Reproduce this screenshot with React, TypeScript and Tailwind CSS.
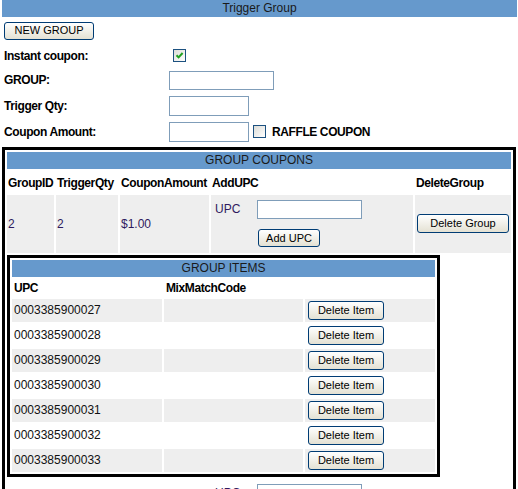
import React from 'react';

type Item = { upc: string; mixMatch: string };

const items: Item[] = [
  { upc: '0003385900027', mixMatch: '' },
  { upc: '0003385900028', mixMatch: '' },
  { upc: '0003385900029', mixMatch: '' },
  { upc: '0003385900030', mixMatch: '' },
  { upc: '0003385900031', mixMatch: '' },
  { upc: '0003385900032', mixMatch: '' },
  { upc: '0003385900033', mixMatch: '' },
];

const btn =
  'rounded-[3px] border border-[#003c74] bg-gradient-to-b from-white to-[#e4e1d3] text-[11px] leading-none text-black';

const CheckBox: React.FC<{ checked?: boolean }> = ({ checked }) => (
  <span className="flex h-[13px] w-[13px] items-center justify-center border border-[#1c5180] bg-gradient-to-br from-[#dcdcd7] to-white">
    {checked && (
      <svg width="9" height="9" viewBox="0 0 9 9">
        <path d="M1.5 4.2 L3.6 6.4 L7.6 2" stroke="#21a121" strokeWidth="2" fill="none" />
      </svg>
    )}
  </span>
);

const TextBox: React.FC<{ w: string; h?: string }> = ({ w, h = 'h-[20px]' }) => (
  <input type="text" className={`${w} ${h} border border-[#7f9db9] bg-white outline-none`} />
);

const UpcLine = () => (
  <div className="flex items-center">
    <span className="w-[42px]">UPC</span>
    <TextBox w="w-[105px]" h="h-[19px]" />
  </div>
);

export default function App() {
  return (
    <div className="h-[489px] w-[518px] overflow-hidden bg-white font-['Liberation_Sans',Arial,sans-serif] text-[12px] text-[#111]">
      {/* title bar */}
      <div className="ml-[2px] mr-[1px] h-[17px] bg-[#6699cc] text-center leading-[17px] text-[#1a1a1a]">
        Trigger Group
      </div>

      <div className="pl-[4px] pt-[4px]">
        <button className={`${btn} h-[18px] w-[90px]`}>NEW GROUP</button>
      </div>

      {/* form */}
      <div className="mt-[4px] grid grid-cols-[165px_1fr] pl-[4px] font-bold tracking-[-0.4px] text-black">
        <div className="flex h-[24px] items-center">Instant coupon:</div>
        <div className="flex h-[24px] items-center pl-[4px]">
          <CheckBox checked />
        </div>

        <div className="flex h-[25px] items-center">GROUP:</div>
        <div className="flex h-[25px] items-center">
          <TextBox w="w-[105px]" h="h-[19px]" />
        </div>

        <div className="flex h-[26px] items-center">Trigger Qty:</div>
        <div className="flex h-[26px] items-center">
          <TextBox w="w-[80px]" />
        </div>

        <div className="flex h-[26px] items-center">Coupon Amount:</div>
        <div className="flex h-[26px] items-center">
          <TextBox w="w-[80px]" />
          <span className="ml-[4px]">
            <CheckBox />
          </span>
          <span className="ml-[6px]">RAFFLE COUPON</span>
        </div>
      </div>

      {/* group coupons */}
      <div className="ml-[2px] mt-[2px] w-[514px] border-[3px] border-black">
        <table className="w-full table-fixed border-separate border-spacing-[2px]">
          <colgroup>
            <col className="w-[47px]" />
            <col className="w-[62px]" />
            <col className="w-[89px]" />
            <col className="w-[202px]" />
            <col className="w-[96px]" />
          </colgroup>
          <tbody>
            <tr>
              <td colSpan={5} className="h-[17px] bg-[#6699cc] p-0 text-center leading-[17px] text-[#1a1a1a]">
                GROUP COUPONS
              </td>
            </tr>
            <tr className="font-bold tracking-[-0.4px] text-black">
              <td className="h-[22px] px-px pb-px align-bottom">GroupID</td>
              <td className="px-px pb-px align-bottom">TriggerQty</td>
              <td className="px-px pb-px align-bottom">CouponAmount</td>
              <td className="px-px pb-px align-bottom">AddUPC</td>
              <td className="px-px pb-px align-bottom">DeleteGroup</td>
            </tr>
            <tr className="text-[#2e1a5e]">
              <td className="h-[58px] bg-[#eeeeee] px-px">2</td>
              <td className="bg-[#eeeeee] px-px">2</td>
              <td className="bg-[#eeeeee] px-px">$1.00</td>
              <td className="bg-[#eeeeee] pl-[4px]">
                <UpcLine />
                <div className="mt-[10px] pl-[43px]">
                  <button className={`${btn} h-[18px] w-[62px]`}>Add UPC</button>
                </div>
              </td>
              <td className="bg-[#eeeeee] text-center">
                <button className={`${btn} h-[19px] w-[92px]`}>Delete Group</button>
              </td>
            </tr>
            <tr>
              <td colSpan={5} className="p-0">
                <div className="w-[433px] border-[3px] border-black">
                  <table className="w-full table-fixed border-separate border-spacing-[2px]">
                    <colgroup>
                      <col className="w-[150px]" />
                      <col className="w-[139px]" />
                      <col className="w-[130px]" />
                    </colgroup>
                    <tbody>
                      <tr>
                        <td colSpan={3} className="h-[17px] bg-[#6699cc] p-0 text-center leading-[17px] text-[#1a1a1a]">
                          GROUP ITEMS
                        </td>
                      </tr>
                      <tr className="font-bold tracking-[-0.4px] text-black">
                        <td className="h-[16px] pl-[2px]">UPC</td>
                        <td className="pl-[2px]">MixMatchCode</td>
                        <td />
                      </tr>
                      {items.map((it, i) => {
                        const bg = i % 2 === 0 ? 'bg-[#eeeeee]' : 'bg-white';
                        return (
                          <tr key={it.upc}>
                            <td className={`${bg} h-[23px] pl-[2px]`}>{it.upc}</td>
                            <td className={`${bg} pl-[2px]`}>{it.mixMatch}</td>
                            <td className={`${bg} pl-[3px]`}>
                              <button className={`${btn} h-[19px] w-[76px]`}>Delete Item</button>
                            </td>
                          </tr>
                        );
                      })}
                    </tbody>
                  </table>
                </div>
              </td>
            </tr>
            {/* next group, cut off by the window */}
            <tr className="text-[#2e1a5e]">
              <td className="h-[30px]" />
              <td />
              <td />
              <td className="pl-[4px] pt-[5px] align-top">
                <UpcLine />
              </td>
              <td />
            </tr>
          </tbody>
        </table>
      </div>
    </div>
  );
}
